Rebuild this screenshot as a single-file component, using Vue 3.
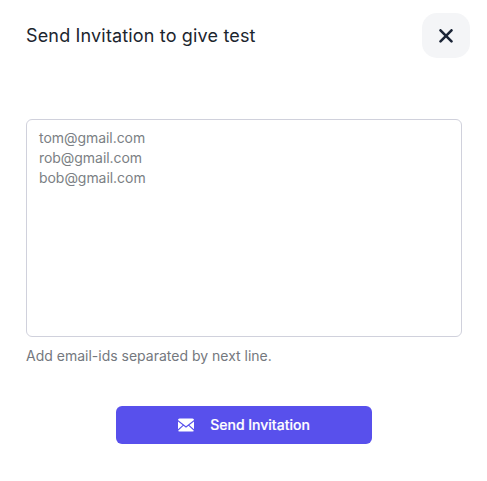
<script setup>
import { ref } from 'vue'
const emails = ref('')
const placeholder = 'tom@gmail.com\nrob@gmail.com\nbob@gmail.com'
</script>

<template>
  <section class="dialog">
    <header class="head">
      <h1 class="title">Send Invitation to give test</h1>
      <button class="close" type="button" aria-label="Close">
        <svg width="14" height="14" viewBox="0 0 14 14"><path d="M1.500 1.300 12.500 12.300M12.500 1.300 1.500 12.300" fill="none" stroke="#1b2537" stroke-width="2.6" stroke-linecap="round" /></svg>
      </button>
    </header>
    <textarea v-model="emails" class="emails" :placeholder="placeholder"></textarea>
    <p class="hint">Add email-ids separated by next line.</p>
    <button class="send" type="button">
      <svg class="mail" width="16" height="14" viewBox="0 0 16 14">
        <rect y=".5" width="16" height="13" rx="1.5" fill="#fff" />
        <path d="M-.5 2.300 8 9 16.500 2.300M-.2 12.300 5.400 7.200M16.200 12.300 10.600 7.200" fill="none" stroke="#5850ec" stroke-width="1.1" />
      </svg>
      <span class="label">Send Invitation</span>
    </button>
  </section>
</template>

<style>
body { margin: 0; background: #fff; }
</style>
<style scoped>
.dialog { box-sizing: border-box; height: 481px; padding: 13px 25px 0 26px; display: flex; flex-direction: column; font-family: Inter, sans-serif; }
.head { display: flex; align-items: center; justify-content: space-between; height: 45px; margin-right: -8px; }
.title { margin: 0; font-size: 18px; font-weight: 400; line-height: 28px; letter-spacing: .16px; color: #1c252e; }
.close { width: 48px; height: 45px; padding: 0; border: 0; border-radius: 15px; background: #f4f5f7; display: flex; align-items: center; justify-content: center; }
.emails { box-sizing: border-box; width: 436px; height: 218px; margin: 61px 0 0; padding: 8px 12px; border: 1px solid #d0d1dc; border-radius: 6px; resize: none; outline: 0; font: 400 14px/20px Inter, sans-serif; letter-spacing: -.05px; color: #333; }
.emails::placeholder { color: #7b7f84; opacity: 1; }
.hint { margin: 9px 0 0; font-size: 14px; line-height: 20px; color: #74787e; }
.send { width: 256px; height: 38px; margin: 40px 0 0 90px; padding: 0; border: 0; border-radius: 6px; background: #5850ec; color: #fff; display: flex; align-items: center; justify-content: center; gap: 16px; font: 500 14px/20px Inter, sans-serif; }
.label { -webkit-text-stroke: .2px #fff; }
</style>
